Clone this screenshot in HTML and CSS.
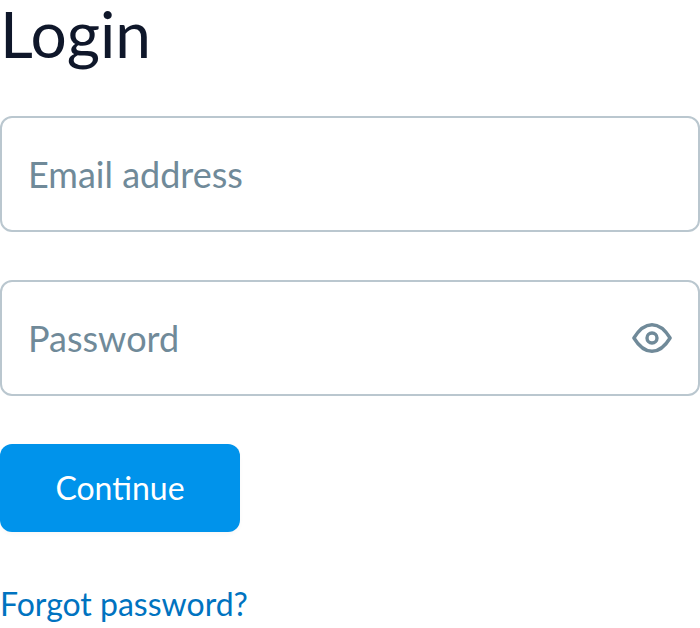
FILE: index.html
```html
<!DOCTYPE html>
<html lang="en">
<head>
<meta charset="utf-8">
<title>Login</title>
<link rel="stylesheet" href="styles.css">
</head>
<body>
<form class="login">
  <h1 class="title">Login</h1>
  <label class="field"><span class="label">Email address</span></label>
  <label class="field"><span class="label">Password</span>
    <svg class="eye" width="40" height="32" viewBox="0 0 40 32" fill="none" stroke="currentColor" stroke-width="3.4">
      <path d="M1.900 16C7.200 7.300 13 2.700 20 2.700S32.800 7.300 38.100 16C32.800 24.700 27 29.300 20 29.300S7.200 24.700 1.900 16Z" stroke-linejoin="round"/>
      <circle cx="20" cy="16" r="5"/>
    </svg>
  </label>
  <button class="continue" type="button">Continue</button>
  <a class="forgot" href="#">Forgot password?</a>
</form>
</body>
</html>
```
FILE: styles.css
```css
* { box-sizing: border-box; }
body { margin: 0; background: #fff; font-family: Lato, sans-serif; overflow: hidden; }
.login { display: flex; flex-direction: column; align-items: flex-start; }
.title { margin: 0 0 36px; height: 80px; line-height: 68px; font-size: 64px; font-weight: 400; color: #0f172a; }
.field { display: flex; align-items: center; justify-content: space-between; width: 100%; height: 116px; margin-bottom: 48px; padding: 0 26px; border: 2px solid #bac7cf; border-radius: 12px; font-size: 36px; line-height: 48px; color: #708a99; }
.eye { display: block; }
.continue { width: 240px; height: 88px; padding: 0; border: 0; border-radius: 12px; background: #0093eb; box-shadow: 0 2px 4px rgba(0, 0, 0, 0.03); color: #fff; font: 400 32px/48px Lato, sans-serif; }
.forgot { margin-top: 48px; font-size: 32px; line-height: 48px; color: #0073c0; text-decoration: none; }
```
